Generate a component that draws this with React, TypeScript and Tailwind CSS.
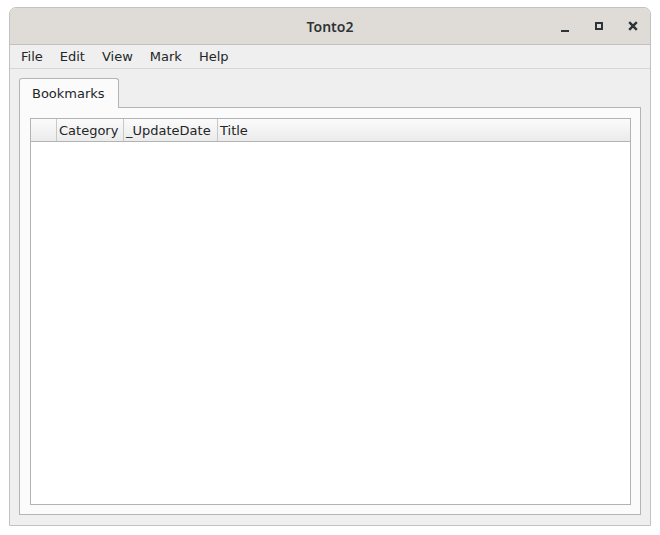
import React from "react";

const menus = ["File", "Edit", "View", "Mark", "Help"];

// header columns: first is the empty corner cell
const columns = [
  { label: "", width: "w-[26px]" },
  { label: "Category", width: "w-[67px]" },
  { label: "_UpdateDate", width: "w-[94px]" },
  { label: "Title", width: "flex-1" },
];

export default function App() {
  return (
    <div className="min-h-[535px] bg-white pl-[9px] pt-[7px] font-['DejaVu_Sans',sans-serif] text-[13px] text-[#232627]">
      {/* window */}
      <div className="flex h-[519px] w-[642px] flex-col overflow-hidden rounded-t-[7px] border border-[#c2c2c2] bg-[#efefef]">
        {/* title bar */}
        <div className="relative flex h-[37px] shrink-0 items-center justify-center border-b border-[#c4c1bc] bg-[#dfdcd8]">
          <span className="font-['Noto_Sans',sans-serif] text-[14px] font-semibold text-[#2e3436]">Tonto2</span>
          <div className="absolute right-0 top-0 flex h-full items-center">
            {/* minimize */}
            <div className="flex w-[34px] items-center justify-center pt-[9px]">
              <div className="h-[2px] w-[8px] bg-[#2e3436]" />
            </div>
            {/* maximize */}
            <div className="flex w-[34px] items-center justify-center">
              <div className="h-[8px] w-[8px] border-2 border-[#2e3436]" />
            </div>
            {/* close */}
            <div className="flex w-[34px] items-center justify-center">
              <svg width="10" height="10" viewBox="0 0 10 10">
                <path d="M1.2 1.2 L8.8 8.8 M8.8 1.2 L1.2 8.8" stroke="#2e3436" strokeWidth="2.4" />
              </svg>
            </div>
          </div>
        </div>

        {/* menu bar */}
        <div className="flex h-[24px] shrink-0 items-center gap-px border-b border-[#d6d6d6] pl-[3px] pt-px">
          {menus.map((m) => (
            <span key={m} className="px-[8px] leading-[22px]">
              {m}
            </span>
          ))}
        </div>

        {/* content */}
        <div className="flex flex-1 flex-col px-[9px] pb-[10px] pt-[9px]">
          {/* tabs */}
          <div className="flex">
            <div className="relative z-10 -mb-px flex h-[30px] w-[100px] items-center rounded-t-[3px] border border-b-0 border-[#b4b4b4] bg-[#fbfbfb] pl-[12px] pt-px">
              Bookmarks
            </div>
          </div>

          {/* pane */}
          <div className="flex flex-1 flex-col border border-[#b4b4b4] bg-[#fbfbfb] pb-[9px] pl-[10px] pr-[9px] pt-[10px]">
            {/* table */}
            <div className="flex flex-1 flex-col border border-[#b3b3b3] bg-white">
              <div className="flex h-[23px] shrink-0 border-b border-[#b3b3b3] bg-gradient-to-b from-[#fbfbfb] to-[#ebebeb]">
                {columns.map((c, i) => (
                  <div
                    key={i}
                    className={`${c.width} flex items-center pl-[2px] pt-px ${i < columns.length - 1 ? "border-r border-[#c8c8c8]" : ""}`}
                  >
                    {c.label}
                  </div>
                ))}
              </div>
              <div className="flex-1" />
            </div>
          </div>
        </div>
      </div>
    </div>
  );
}
